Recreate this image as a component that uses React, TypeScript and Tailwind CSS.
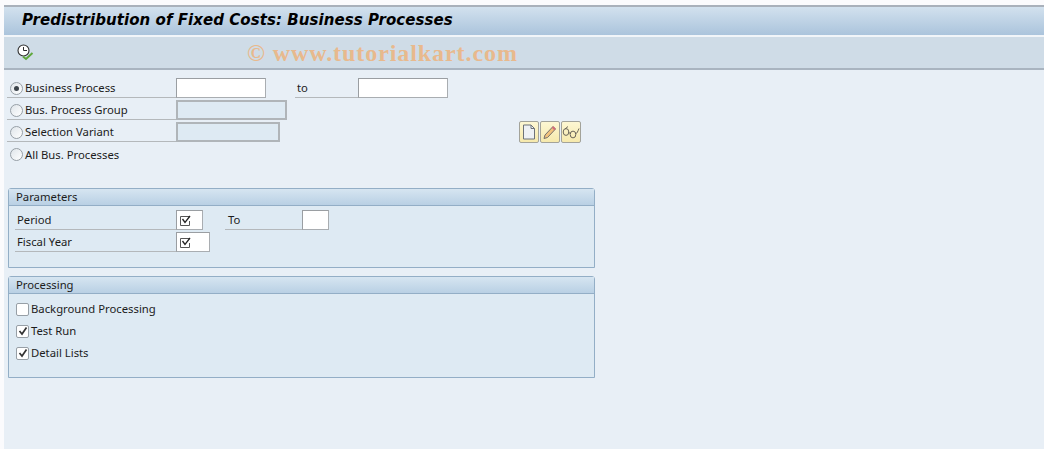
const font = "[font-family:'Noto_Sans',sans-serif]";

function Radio({ on }: { on?: boolean }) {
  return (
    <span className="w-[13px] h-[13px] mt-[1px] shrink-0 rounded-full border border-[#979fa6] bg-gradient-to-br from-[#dfe5ea] to-white flex items-center justify-center">
      {on && <span className="w-[5px] h-[5px] rounded-full bg-[#3b434a]" />}
    </span>
  );
}

function Field({ w, disabled, checked }: { w: string; disabled?: boolean; checked?: boolean }) {
  return (
    <div
      className={`${w} h-[20px] shrink-0 flex items-center pl-[2px] ${
        disabled ? 'bg-[#deeaf3] border-2 border-[#b0b5b9]' : 'bg-white border border-[#a9adb1] border-t-[#9a9ea2] border-l-[#9a9ea2]'
      }`}
    >
      {checked && <FieldCheck />}
    </div>
  );
}

function FieldCheck() {
  return (
    <svg width="13" height="13" viewBox="0 0 13 13" fill="none">
      <path d="M10 2.5H1.5V11.5H10.5V7" stroke="#555" strokeWidth="1" />
      <path d="M3.5 5L6 8.5L11 2" stroke="#222" strokeWidth="1.3" />
    </svg>
  );
}

function RadioRow({ label, on, line = true, children }: { label: string; on?: boolean; line?: boolean; children?: React.ReactNode }) {
  return (
    <div className="h-[22px] flex items-start">
      <div className={`w-[169px] h-[20px] shrink-0 flex items-center pl-[3px] gap-[2px] ${line ? 'border-b border-[#b4b8bb]' : ''}`}>
        <Radio on={on} />
        <span className="pt-[1px] text-[11.3px] leading-none text-[#1c1c1c]">{label}</span>
      </div>
      {children}
    </div>
  );
}

function Group({ title, h, children }: { title: string; h: string; children: React.ReactNode }) {
  return (
    <section className={`w-[587px] ${h} border border-[#93aec6] rounded-t-[3px] bg-[#deeaf3]`}>
      <div className="h-[17px] pl-[7px] flex items-center bg-gradient-to-b from-[#d6e5f1] to-[#b9d0e4] border-b border-[#93aec6] text-[11.3px] text-[#1c1c1c]">
        {title}
      </div>
      {children}
    </section>
  );
}

function CheckRow({ label, checked }: { label: string; checked?: boolean }) {
  return (
    <div className="h-[22px] flex items-center pl-[7px] gap-[2px]">
      <span className="w-[13px] h-[13px] shrink-0 rounded-[2px] border border-[#979fa6] bg-white flex items-center justify-center">
        {checked && (
          <svg width="10" height="10" viewBox="0 0 10 10" fill="none">
            <path d="M1.5 5L4 8L8.5 1.5" stroke="#333" strokeWidth="1.7" />
          </svg>
        )}
      </span>
      <span className="mb-[1px] text-[11.3px] leading-none text-[#1c1c1c]">{label}</span>
    </div>
  );
}

function ToolButton({ children }: { children: React.ReactNode }) {
  return (
    <button className="w-[20px] h-[22px] rounded-[2px] border border-[#a3a39a] bg-gradient-to-b from-[#fdf7d3] to-[#f6e9ac] flex items-center justify-center">
      {children}
    </button>
  );
}

export default function App() {
  return (
    <div className={`w-[1044px] h-[449px] bg-[#fbfbfd] pt-[5px] pl-[4px] overflow-hidden ${font}`}>
      <div className="h-[444px] bg-[#e8eff6] flex flex-col">
        {/* title bar */}
        <header className="h-[32px] shrink-0 border-t-2 border-[#a9b1bb] border-b-2 border-b-[#f1f5f9] bg-gradient-to-b from-[#d2e1ee] to-[#abc4dc] pl-[18px] pb-[2px] flex items-center">
          <h1 className="text-[15px] leading-none font-bold italic text-black font-['DejaVu_Sans',sans-serif] tracking-[0.06px]">
            Predistribution of Fixed Costs: Business Processes
          </h1>
        </header>

        {/* toolbar */}
        <div className="h-[33px] shrink-0 bg-[#cfdce7] border-b-2 border-[#a9b4c0] flex items-center pl-[13px]">
          <svg width="18" height="18" viewBox="0 0 18 18" fill="none">
            <circle cx="6.5" cy="6.5" r="5.5" fill="#fff" stroke="#2e2e2e" strokeWidth="1.1" />
            <path d="M6.5 3V6.5H10" stroke="#2e2e2e" strokeWidth="1" />
            <path d="M6 12.5L9 15L15.5 9" stroke="#5fa83c" strokeWidth="2" />
          </svg>
          <span className="ml-[212px] font-['Liberation_Serif',serif] font-bold text-[24px] leading-none tracking-[0.92px] text-[#e8b98d]">
            © www.tutorialkart.com
          </span>
        </div>

        {/* selection */}
        <div className="pl-[3px] pt-[8px]">
          <RadioRow label="Business Process" on>
            <Field w="w-[90px]" />
            <div className="w-[63px] ml-[29px] h-[20px] pt-[1px] border-b border-[#b4b8bb] flex items-center pl-[2px] text-[11.3px] text-[#1c1c1c] shrink-0">
              to
            </div>
            <Field w="w-[90px]" />
          </RadioRow>
          <RadioRow label="Bus. Process Group">
            <Field w="w-[111px]" disabled />
          </RadioRow>
          <RadioRow label="Selection Variant">
            <Field w="w-[104px]" disabled />
            <div className="ml-[239px] flex gap-[1px] mt-[-1px]">
              <ToolButton>
                <svg width="14" height="16" viewBox="0 0 14 16" fill="none">
                  <path d="M1.5 1H9L12.5 4.5V15H1.5Z" fill="#eef1f4" stroke="#6d7278" />
                  <path d="M9 1V4.5H12.5" stroke="#6d7278" />
                </svg>
              </ToolButton>
              <ToolButton>
                <svg width="16" height="16" viewBox="0 0 16 16" fill="none">
                  <path d="M3 11L11 2.5L13.5 5L5.5 13.5L2 14.5Z" fill="#f1c27d" stroke="#75706a" />
                  <path d="M10.5 3L13 5.5" stroke="#d46a7a" strokeWidth="2" />
                </svg>
              </ToolButton>
              <ToolButton>
                <svg width="18" height="15" viewBox="0 0 18 15" fill="none" stroke="#6b665a" strokeWidth="1">
                  <ellipse cx="4" cy="7" rx="2.8" ry="3.4" />
                  <ellipse cx="11" cy="9.5" rx="2.8" ry="3.4" />
                  <path d="M6.5 7.5L8.5 8.5M3 4L6 1.5M13.5 9C15 8.5 16 6 17 3.5" />
                </svg>
              </ToolButton>
            </div>
          </RadioRow>
          <RadioRow label="All Bus. Processes" line={false} />
        </div>

        {/* groups */}
        <div className="pl-[4px] pt-[22px] flex flex-col gap-[8px]">
          <Group title="Parameters" h="h-[80px]">
            <div className="pt-[4px] pl-[6px]">
              <div className="h-[22px] flex items-start">
                <div className="w-[161px] h-[20px] pt-[1px] shrink-0 border-b border-[#b4b8bb] pl-[2px] flex items-center text-[11.3px] text-[#1c1c1c]">Period</div>
                <Field w="w-[27px]" checked />
                <div className="w-[77px] ml-[22px] h-[20px] pt-[1px] shrink-0 border-b border-[#b4b8bb] pl-[3px] flex items-center text-[11.3px] text-[#1c1c1c]">To</div>
                <Field w="w-[27px]" />
              </div>
              <div className="h-[22px] flex items-start">
                <div className="w-[161px] h-[20px] pt-[1px] shrink-0 border-b border-[#b4b8bb] pl-[2px] flex items-center text-[11.3px] text-[#1c1c1c]">Fiscal Year</div>
                <Field w="w-[34px]" checked />
              </div>
            </div>
          </Group>
          <Group title="Processing" h="h-[102px]">
            <div className="pt-[4px]">
              <CheckRow label="Background Processing" />
              <CheckRow label="Test Run" checked />
              <CheckRow label="Detail Lists" checked />
            </div>
          </Group>
        </div>
      </div>
    </div>
  );
}
